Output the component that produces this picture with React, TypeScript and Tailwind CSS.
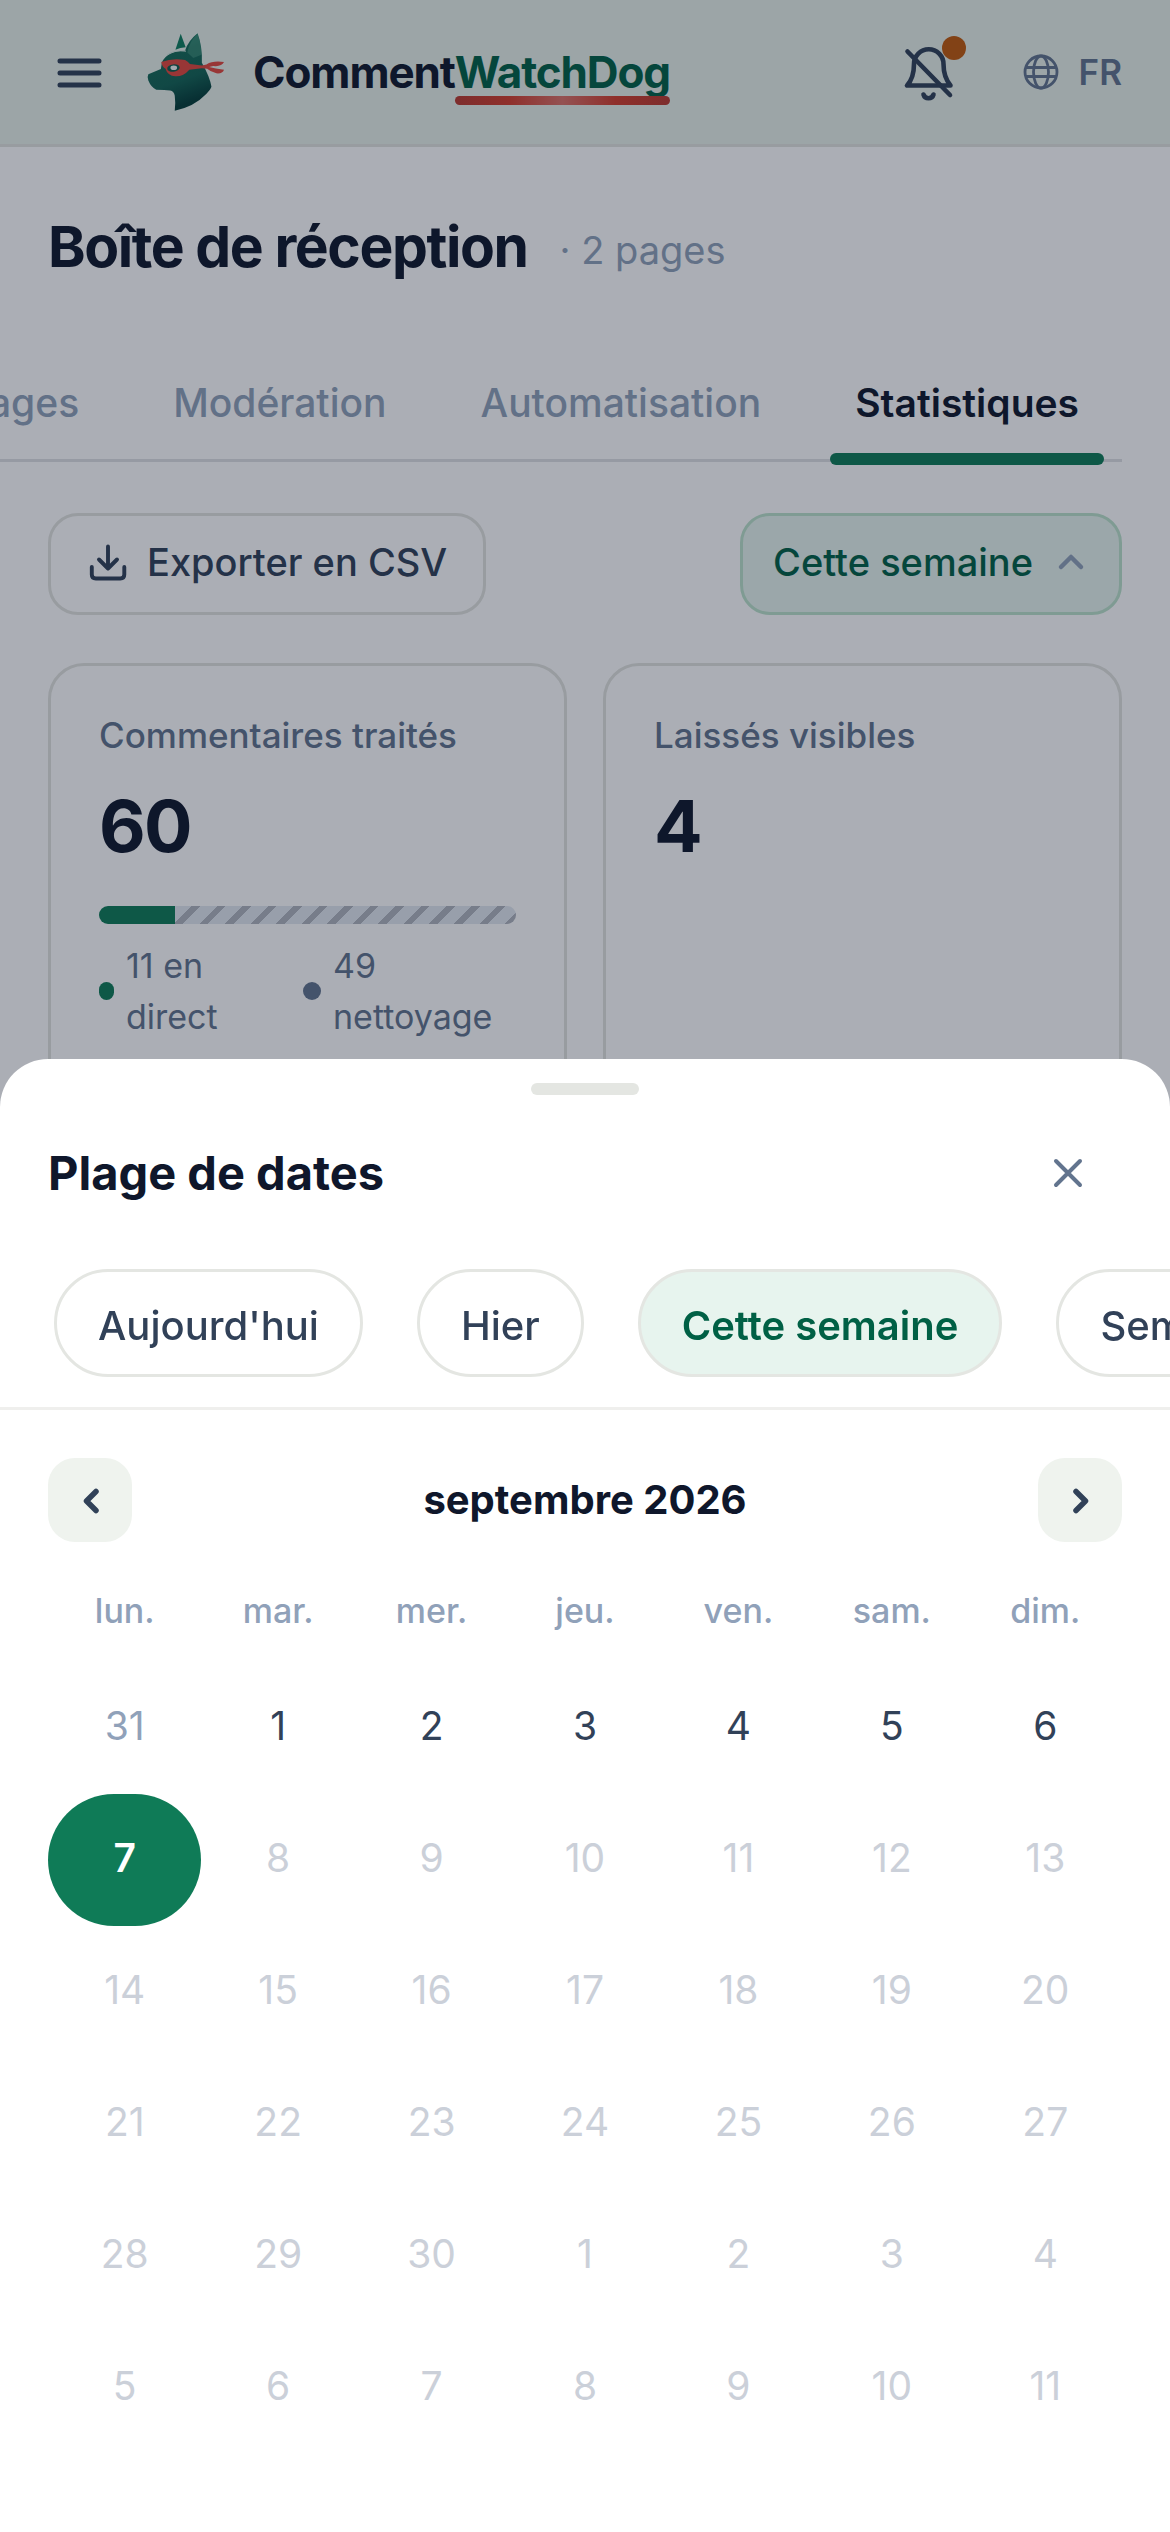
import { useState, type ReactNode } from "react";

const tabs = ["Pages", "Modération", "Automatisation", "Statistiques"];

const presets = ["Aujourd'hui", "Hier", "Cette semaine", "Semaine dernière"];

const weekdays = ["lun.", "mar.", "mer.", "jeu.", "ven.", "sam.", "dim."];

const days = [
  31, 1, 2, 3, 4, 5, 6,
  7, 8, 9, 10, 11, 12, 13,
  14, 15, 16, 17, 18, 19, 20,
  21, 22, 23, 24, 25, 26, 27,
  28, 29, 30, 1, 2, 3, 4,
  5, 6, 7, 8, 9, 10, 11,
];

// index of the current day in the grid, everything after it is disabled
const today = 7;

function Logo() {
  return (
    <svg viewBox="50 38 236 236" className="size-[78px] shrink-0" aria-hidden="true">
      <defs>
        <linearGradient id="coat" x1="0" y1="0" x2="0.3" y2="1">
          <stop offset="0" stopColor="#2c8a6f" />
          <stop offset="0.35" stopColor="#146a56" />
          <stop offset="0.7" stopColor="#136354" />
          <stop offset="1" stopColor="#043c37" />
        </linearGradient>
      </defs>
      <path d="M152 40 L136 89 Q150 82 167 81 Z" fill="#0f7f5e" />
      <path
        d="M203 39 Q174 62 165 92 Q112 92 95 127 L92 147 L54 163 Q50 170 54 182 Q62 202 78 210 Q104 211 120 212 Q132 214 134 228 Q137 250 134 273 Q192 262 230 222 Q243 208 245 201 Q240 170 216 128 Q218 80 203 39 Z"
        fill="url(#coat)"
      />
      <path d="M203 41 Q177 64 172 97 L190 114 L215 104 Q214 70 203 41 Z" fill="#5fae93" opacity="0.4" />
      <path d="M110 105 Q130 88 168 93" fill="none" stroke="#cfe3db" strokeWidth="3" />
      <path
        d="M93 126 Q130 112 165 120 Q174 124 180 132 L216 136 L230 133 Q250 121 283 126 Q276 141 250 138 L238 141 Q256 146 283 149 Q278 162 260 160 Q242 155 232 146 L216 145 L178 149 Q160 170 136 169 Q112 167 106 146 Q96 142 93 126 Z"
        fill="#e2473c"
      />
      <ellipse cx="130" cy="144" rx="19" ry="11" fill="#0d5c4c" transform="rotate(-8 130 144)" />
      <ellipse cx="131" cy="143" rx="10" ry="7" fill="#f3f6f4" />
    </svg>
  );
}

function Header() {
  return (
    <header className="flex h-[147px] items-center border-b-[3px] border-[#e2e3df] bg-[#e8f1ea] px-12">
      <button aria-label="Menu" className="text-slate-700">
        <svg viewBox="0 0 63 60" className="h-[60px] w-[63px]" stroke="currentColor" strokeWidth="5" strokeLinecap="round">
          <path d="M12 19h39M12 31h39M12 43h39" />
        </svg>
      </button>
      <a href="#" className="ml-9 flex items-center gap-7 text-[44px] leading-[60px] font-bold tracking-tight text-slate-900">
        <Logo />
        <span>
          Comment
          <span className="relative text-emerald-800">
            WatchDog
            <span className="absolute inset-x-0 -bottom-1.5 h-[9px] rounded-full bg-[linear-gradient(90deg,#b93a2e,#d43c2b_25%,#dc7268_50%,#d43c2b_75%,#b93a2e)]" />
          </span>
        </span>
      </a>
      <button aria-label="Notifications" className="relative ml-auto text-slate-700">
        <svg viewBox="0 0 66 72" className="h-[72px] w-[66px]" fill="none" stroke="currentColor" strokeWidth="4.6" strokeLinecap="round" strokeLinejoin="round">
          <path d="M7 49.5H50.5Q43.5 41 43.5 28A14.75 14.75 0 0 0 14 28Q14 42 7 49.5Z" />
          <path d="M23.5 58.5A5.2 5.2 0 0 0 33.5 58.5" />
          <path d="M7.5 15.5L50 59" />
        </svg>
        <span className="absolute top-0 right-0 size-6 rounded-full bg-[#c05a0c]" />
      </button>
      <button className="ml-[57px] flex items-center gap-5 text-[35px] leading-[48px] font-semibold text-slate-500">
        <svg viewBox="0 0 36 36" className="size-9" fill="none" stroke="currentColor" strokeWidth="2.8">
          <circle cx="18" cy="18" r="16" />
          <ellipse cx="18" cy="18" rx="7.5" ry="16" />
          <path d="M3 13.5h30M3 22.5h30" />
        </svg>
        FR
      </button>
    </header>
  );
}

function StatCard({ label, value, children }: { label: string; value: number; children?: ReactNode }) {
  return (
    <section className="h-[480px] rounded-[36px] border-[3px] border-[#e2e3df] p-12">
      <h2 className="text-[35px] leading-[42px] font-medium text-slate-500">{label}</h2>
      <p className="mt-7 text-[72px] leading-[84px] font-bold tracking-tight text-slate-900">{value}</p>
      {children}
    </section>
  );
}

function Split({ live, cleanup }: { live: number; cleanup: number }) {
  return (
    <>
      <div className="mt-[38px] flex h-[18px] overflow-hidden rounded-full">
        <div className="bg-[#0f7b57]" style={{ width: `${(live / (live + cleanup)) * 100}%` }} />
        <div className="flex-1 bg-[repeating-linear-gradient(135deg,#e2e8f0_0_12px,#afb4be_12px_18px)]" />
      </div>
      <div className="mt-4 grid grid-cols-[204px_1fr] text-[34px] leading-[51px] text-slate-500">
        <span className="flex items-center gap-3">
          <i className="h-[18px] w-[15px] rounded-full bg-[#0f7b57]" />
          <span>
            {live} en
            <br />
            direct
          </span>
        </span>
        <span className="flex items-center gap-3">
          <i className="size-[18px] rounded-full bg-slate-500" />
          <span>
            {cleanup}
            <br />
            nettoyage
          </span>
        </span>
      </div>
    </>
  );
}

function Inbox() {
  return (
    <main>
      <div className="flex items-end gap-8 px-12 pt-16">
        <h1 className="text-[57px] leading-[72px] font-bold tracking-tight text-slate-900">Boîte de réception</h1>
        <p className="text-[38px] leading-[66px] text-slate-400">· 2 pages</p>
      </div>

      {/* Tabs, scrolled to the end */}
      <div className="mt-[93px] mr-12 flex justify-end overflow-x-clip">
        <nav className="flex shrink-0 gap-11 border-b-[3px] border-[#dfe1e3] pr-[18px] text-[39px] leading-[54px]">
          {tabs.map((tab) =>
            tab === "Statistiques" ? (
              <a key={tab} href="#" aria-current="page" className="relative px-[25px] pb-[29px] font-semibold text-slate-900">
                {tab}
                <span className="absolute inset-x-0 -bottom-1.5 h-3 rounded-full bg-[#0f7b57]" />
              </a>
            ) : (
              <a key={tab} href="#" className="px-[25px] pb-[29px] font-medium text-slate-400">
                {tab}
              </a>
            )
          )}
        </nav>
      </div>

      <div className="mt-[51px] flex items-center justify-between px-12 text-[38px] leading-[54px] font-medium">
        <button className="flex h-[102px] items-center gap-[18px] rounded-[30px] border-[3px] border-[#e2e3df] px-9 pb-1 text-slate-700">
          <svg viewBox="0 0 42 42" className="size-[42px]" fill="none" stroke="currentColor" strokeWidth="3.9" strokeLinecap="round" strokeLinejoin="round">
            <path d="M4.8 26v7.5q0 4 4 4h24.5q4 0 4-4V26" />
            <path d="M21 5.5V27.5M12 18.5l9 9 9-9" />
          </svg>
          Exporter en CSV
        </button>
        <button className="flex h-[102px] items-center gap-5 rounded-[30px] border-[3px] border-[#bce2cb] bg-[#e7f4ee] px-[30px] pb-1 text-emerald-800">
          Cette semaine
          <svg viewBox="0 0 36 36" className="size-9 text-slate-400" fill="none" stroke="currentColor" strokeWidth="4.5" strokeLinecap="round" strokeLinejoin="round">
            <path d="M8 23l10-10 10 10" />
          </svg>
        </button>
      </div>

      <div className="mt-12 grid grid-cols-2 gap-9 px-12">
        <StatCard label="Commentaires traités" value={60}>
          <Split live={11} cleanup={49} />
        </StatCard>
        <StatCard label="Laissés visibles" value={4} />
      </div>
    </main>
  );
}

function dayClass(i: number) {
  if (i === today) return "h-[132px] rounded-full bg-[#0f7b57] pb-1 font-semibold text-white";
  if (i > today) return "h-[132px] pb-1 text-[#cbd0d9]";
  if (i === 0) return "h-[132px] pb-1 text-slate-400";
  return "h-[132px] pb-1 text-slate-700";
}

function DateSheet() {
  const [preset, setPreset] = useState("Cette semaine");

  return (
    <div role="dialog" aria-labelledby="range-title" className="rounded-t-[48px] bg-white pt-6 pb-[78px]">
      <div className="mx-auto h-3 w-[108px] rounded-full bg-[#e4e6e2]" />

      <div className="mt-9 flex items-center justify-between px-12">
        <h2 id="range-title" className="text-[47px] leading-[60px] font-bold text-slate-900">
          Plage de dates
        </h2>
        <button aria-label="Fermer" className="mr-3 flex size-[84px] items-center justify-center text-slate-500">
          <svg viewBox="0 0 36 36" className="size-9" stroke="currentColor" strokeWidth="4" strokeLinecap="round">
            <path d="M6 6l24 24M30 6L6 30" />
          </svg>
        </button>
      </div>

      <div className="mt-[54px] flex gap-[54px] overflow-hidden border-b-[3px] border-[#efefed] px-[54px] pb-[30px]">
        {presets.map((name) => (
          <button
            key={name}
            onClick={() => setPreset(name)}
            className={
              name === preset
                ? "h-[108px] shrink-0 rounded-full border-[3px] border-[#e4e6e2] bg-[#e7f4ee] px-[41px] pt-1.5 text-[40px] font-semibold text-emerald-800"
                : "h-[108px] shrink-0 rounded-full border-[3px] border-[#e4e6e2] px-[41px] pt-1.5 text-[40px] font-medium text-slate-700"
            }
          >
            {name}
          </button>
        ))}
      </div>

      <div className="flex items-center justify-between px-12 pt-12 text-slate-700">
        <button aria-label="Mois précédent" className="flex size-[84px] items-center justify-center rounded-[27px] bg-[#eff3ee]">
          <svg viewBox="0 0 36 36" className="size-9" fill="none" stroke="currentColor" strokeWidth="5.5" strokeLinecap="round" strokeLinejoin="round">
            <path d="M24 9.5L14.5 19 24 28.5" />
          </svg>
        </button>
        <p className="text-[40px] leading-[60px] font-bold text-slate-900">septembre 2026</p>
        <button aria-label="Mois suivant" className="flex size-[84px] items-center justify-center rounded-[27px] bg-[#eff3ee]">
          <svg viewBox="0 0 36 36" className="size-9" fill="none" stroke="currentColor" strokeWidth="5.5" strokeLinecap="round" strokeLinejoin="round">
            <path d="M14 9.5L23.5 19 14 28.5" />
          </svg>
        </button>
      </div>

      <div className="mt-[45px] grid grid-cols-7 px-12 text-center text-[34px] leading-[48px] font-medium text-slate-400">
        {weekdays.map((d) => (
          <span key={d}>{d}</span>
        ))}
      </div>
      <div className="mt-[27px] grid grid-cols-7 px-12 text-[39px] leading-[48px]">
        {days.map((d, i) => (
          <button key={i} disabled={i > today} className={dayClass(i)}>
            {d}
          </button>
        ))}
      </div>
    </div>
  );
}

export default function App() {
  return (
    <div className="h-screen overflow-hidden bg-white font-[Inter,sans-serif]">
      <Header />
      <Inbox />
      <div className="fixed inset-0 flex flex-col justify-end bg-slate-900/35">
        <DateSheet />
      </div>
    </div>
  );
}
